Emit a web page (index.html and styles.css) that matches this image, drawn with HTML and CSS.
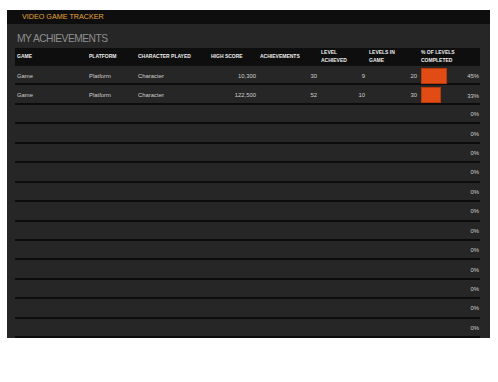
FILE: index.html
```html
<!DOCTYPE html>
<html>
<head>
<meta charset="utf-8">
<link rel="stylesheet" href="styles.css">
</head>
<body>
<div class="panel">
  <div class="topbar">VIDEO GAME TRACKER</div>
  <div class="title">MY ACHIEVEMENTS</div>
  <div class="table">
    <div class="row head">
      <div class="c">GAME</div>
      <div class="c">PLATFORM</div>
      <div class="c">CHARACTER PLAYED</div>
      <div class="c">HIGH SCORE</div>
      <div class="c">ACHIEVEMENTS</div>
      <div class="c">LEVEL<br>ACHIEVED</div>
      <div class="c">LEVELS IN<br>GAME</div>
      <div class="c">% OF LEVELS<br>COMPLETED</div>
    </div>
    <div class="row">
      <div class="c">Game</div><div class="c">Platform</div><div class="c">Character</div>
      <div class="c num">10,300</div><div class="c num">30</div><div class="c num">9</div><div class="c num">20</div>
      <div class="c pct"><span class="bar" style="width:26px"></span><span class="pv">45%</span></div>
    </div>
    <div class="row">
      <div class="c">Game</div><div class="c">Platform</div><div class="c">Character</div>
      <div class="c num">122,500</div><div class="c num">52</div><div class="c num">10</div><div class="c num">30</div>
      <div class="c pct"><span class="bar" style="width:20px"></span><span class="pv">33%</span></div>
    </div>
    <div class="row"><div class="c"></div><div class="c"></div><div class="c"></div><div class="c"></div><div class="c"></div><div class="c"></div><div class="c"></div><div class="c pct"><span class="pv">0%</span></div></div>
    <div class="row"><div class="c"></div><div class="c"></div><div class="c"></div><div class="c"></div><div class="c"></div><div class="c"></div><div class="c"></div><div class="c pct"><span class="pv">0%</span></div></div>
    <div class="row"><div class="c"></div><div class="c"></div><div class="c"></div><div class="c"></div><div class="c"></div><div class="c"></div><div class="c"></div><div class="c pct"><span class="pv">0%</span></div></div>
    <div class="row"><div class="c"></div><div class="c"></div><div class="c"></div><div class="c"></div><div class="c"></div><div class="c"></div><div class="c"></div><div class="c pct"><span class="pv">0%</span></div></div>
    <div class="row"><div class="c"></div><div class="c"></div><div class="c"></div><div class="c"></div><div class="c"></div><div class="c"></div><div class="c"></div><div class="c pct"><span class="pv">0%</span></div></div>
    <div class="row"><div class="c"></div><div class="c"></div><div class="c"></div><div class="c"></div><div class="c"></div><div class="c"></div><div class="c"></div><div class="c pct"><span class="pv">0%</span></div></div>
    <div class="row"><div class="c"></div><div class="c"></div><div class="c"></div><div class="c"></div><div class="c"></div><div class="c"></div><div class="c"></div><div class="c pct"><span class="pv">0%</span></div></div>
    <div class="row"><div class="c"></div><div class="c"></div><div class="c"></div><div class="c"></div><div class="c"></div><div class="c"></div><div class="c"></div><div class="c pct"><span class="pv">0%</span></div></div>
    <div class="row"><div class="c"></div><div class="c"></div><div class="c"></div><div class="c"></div><div class="c"></div><div class="c"></div><div class="c"></div><div class="c pct"><span class="pv">0%</span></div></div>
    <div class="row"><div class="c"></div><div class="c"></div><div class="c"></div><div class="c"></div><div class="c"></div><div class="c"></div><div class="c"></div><div class="c pct"><span class="pv">0%</span></div></div>
    <div class="row"><div class="c"></div><div class="c"></div><div class="c"></div><div class="c"></div><div class="c"></div><div class="c"></div><div class="c"></div><div class="c pct"><span class="pv">0%</span></div></div>
    <div class="row"><div class="c"></div><div class="c"></div><div class="c"></div><div class="c"></div><div class="c"></div><div class="c"></div><div class="c"></div><div class="c pct"><span class="pv">0%</span></div></div>
  </div>
</div>
</body>
</html>
```

FILE: styles.css
```css
* { box-sizing: border-box; }
body {
  margin: 0;
  background: #ffffff;
  font-family: "Liberation Sans", Arial, sans-serif;
}
.panel {
  margin: 10px 0 0 7px;
  width: 483px;
  height: 328px;
  background: #262626;
}
.topbar {
  height: 14px;
  background: #0e0e0e;
  color: #e6a534;
  font-size: 7.2px;
  line-height: 14px;
  padding-left: 15px;
}
.title {
  height: 23.5px;
  color: #8e8e8e;
  font-size: 10.3px;
  letter-spacing: -0.55px;
  line-height: 14px;
  padding: 8px 0 0 10px;
}
.table {
  margin: 0 10px 0 8px;
}
.row {
  display: grid;
  grid-template-columns: 72px 49px 73px 49px 61px 48px 52px 61px;
  height: 19.45px;
  border-bottom: 2px solid #0c0c0c;
  align-items: center;
  color: #cfcfcf;
  font-size: 5.9px;
}
.row.head {
  height: 18.5px;
  background: #0e0e0e;
  border-bottom: 0;
  color: #ececec;
  font-size: 5px;
  font-weight: bold;
  line-height: 7.3px;
}
.c {
  padding-left: 2px;
  white-space: nowrap;
}
.num {
  text-align: right;
  padding-right: 2px;
}
.pct {
  display: flex;
  align-items: center;
  height: 100%;
  padding: 1.5px 1px 1.5px 2px;
}
.bar {
  display: block;
  height: 16.5px;
  background: #e04c14;
  border: 1px solid #b83a0c;
}
.pv {
  margin-left: auto;
  padding-top: 1px;
}
```
